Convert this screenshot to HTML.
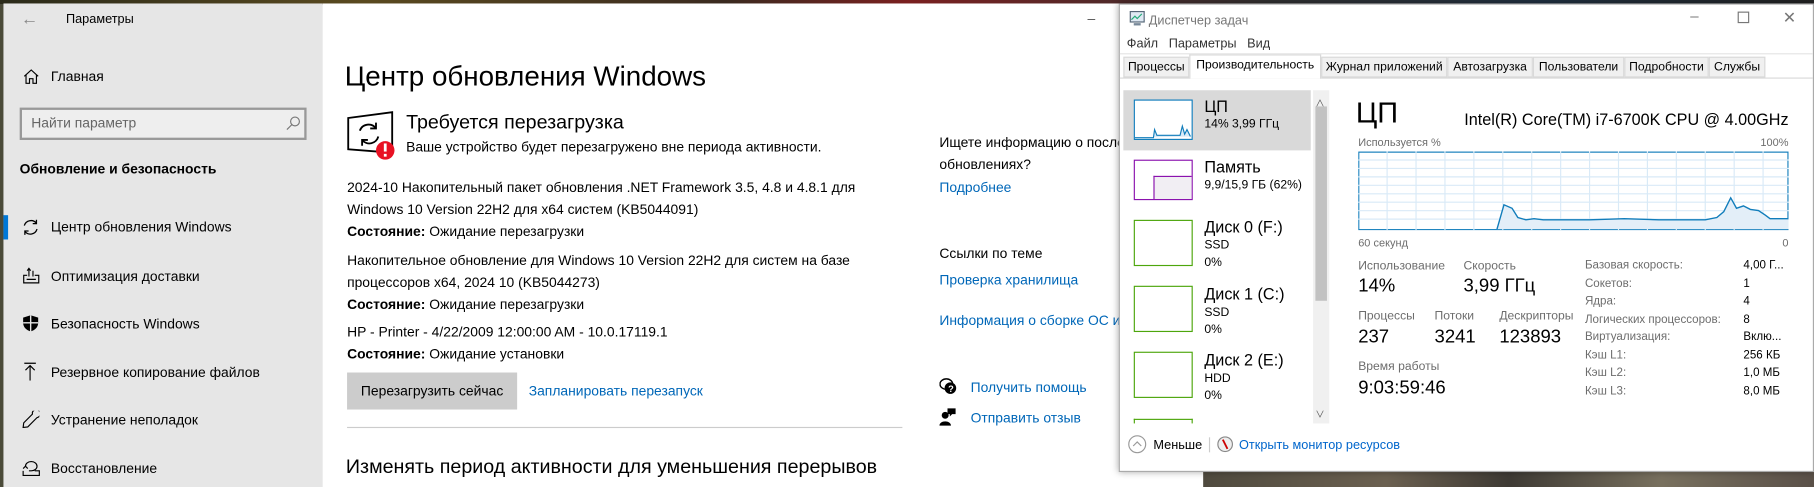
<!DOCTYPE html>
<html><head><meta charset="utf-8">
<style>
*{margin:0;padding:0;box-sizing:border-box}
html,body{width:1814px;height:487px;overflow:hidden;background:#fff}
#st{position:absolute;left:0;top:0;width:1568px;height:421px;transform:scale(1.15689);transform-origin:0 0;font-family:"Liberation Sans","Noto Sans CJK SC",sans-serif;color:#000;overflow:hidden}
.a{position:absolute;white-space:nowrap;line-height:16px}
.l{color:#0067b8}
.g{color:#6d6d6d}
.tab{position:absolute;top:49px;height:18px;background:#f0f0f0;border:1px solid #d9d9d9;font-size:10.5px;line-height:16px;text-align:center}
.th{position:absolute;left:980px;width:51px;height:40px;border:1px solid}
.i1{font-size:14px}
.sm{font-size:10.5px}
</style></head><body><div id="st">
<div style="position:absolute;left:0;top:0;width:1568px;height:4px;background:linear-gradient(90deg,#2a2a1a,#5a4a20 20%,#3a2a20 40%,#7a2020 50%,#303030 70%,#203040 85%,#222)"></div>
<div style="position:absolute;left:0;top:4px;width:3px;height:417px;background:#4a4a38"></div>
<div style="position:absolute;left:3px;top:3px;width:276px;height:418px;background:#e6e6e6"></div>
<div style="position:absolute;left:279px;top:3px;width:700px;height:418px;background:#fff"></div>
<div class="a g" style="left:18px;top:9px;font-size:15px;color:#888">&#8592;</div>
<div class="a" style="left:57px;top:9px;font-size:11px">Параметры</div>
<svg style="position:absolute;left:20px;top:59px" width="14" height="14" viewBox="0 0 14 14" fill="none" stroke="#000" stroke-width="1"><path d="M1 7L7 1.5L13 7M2.5 5.8V13H5.5V9H8.5V13H11.5V5.8"/></svg>
<div class="a" style="left:44px;top:58px;font-size:12px">Главная</div>
<div style="position:absolute;left:17px;top:93px;width:248px;height:28px;border:2px solid #999;background:#eee"></div>
<div class="a" style="left:27px;top:98px;font-size:12px;color:#666">Найти параметр</div>
<svg style="position:absolute;left:247px;top:100px" width="13" height="13" viewBox="0 0 13 13" fill="none" stroke="#777"><circle cx="8" cy="5" r="3.8"/><path d="M5.3 7.7L1 12"/></svg>
<div class="a" style="left:17px;top:138px;font-size:12px;font-weight:bold">Обновление и безопасность</div>
<div style="position:absolute;left:3px;top:186px;width:4px;height:21px;background:#0078d7"></div>
<svg style="position:absolute;left:19px;top:189px" width="15" height="15" viewBox="0 0 15 15" fill="none" stroke="#000" stroke-width="1.1"><path d="M2 6A6 6 0 0 1 12.5 4M13 9A6 6 0 0 1 2.5 11M12.5 1V4.3H9.3M2.5 14V10.7H5.7"/></svg>
<div class="a" style="left:44px;top:188px;font-size:12px">Центр обновления Windows</div>
<svg style="position:absolute;left:19px;top:231px" width="16" height="15" viewBox="0 0 16 15" fill="none" stroke="#000" stroke-width="1"><path d="M1 13.5H15M1.5 13.5V7H4.5M11 7H14.5V13.5M6 1V8M4.5 3L6 1L7.5 3M9.5 3V8M4 10.5H12"/></svg>
<div class="a" style="left:44px;top:231px;font-size:12px">Оптимизация доставки</div>
<svg style="position:absolute;left:19px;top:272px" width="15" height="15" viewBox="0 0 15 15"><path d="M7.5 0.5L1 2.5V7C1 11 4 13.5 7.5 14.5C11 13.5 14 11 14 7V2.5Z" fill="#000"/><path d="M7.5 0.5V14.5M1 7H14" stroke="#e6e6e6" stroke-width="1.2"/></svg>
<div class="a" style="left:44px;top:272px;font-size:12px">Безопасность Windows</div>
<svg style="position:absolute;left:20px;top:313px" width="12" height="16" viewBox="0 0 12 16" fill="none" stroke="#000"><path d="M1 1H11M6 3V16M2 7L6 3L10 7"/></svg>
<div class="a" style="left:44px;top:314px;font-size:12px">Резервное копирование файлов</div>
<svg style="position:absolute;left:19px;top:355px" width="15" height="15" viewBox="0 0 15 15" fill="none" stroke="#000"><path d="M9 1.5A3.5 3.5 0 1 1 13 6L5 14L1 14.5L1.5 10.5L9 3Z"/></svg>
<div class="a" style="left:44px;top:355px;font-size:12px">Устранение неполадок</div>
<svg style="position:absolute;left:19px;top:397px" width="16" height="15" viewBox="0 0 16 15" fill="none" stroke="#000"><path d="M1 10V14H15V10H11M3 6A5 4 0 1 1 8 10H6M5 8L3 6L1 8"/></svg>
<div class="a" style="left:44px;top:397px;font-size:12px">Восстановление</div>
<div class="a" style="left:940px;top:8px;font-size:12px;color:#555">–</div>
<div class="a" style="left:298px;top:52px;font-size:24px;line-height:30px;font-weight:300">Центр обновления Windows</div>
<svg style="position:absolute;left:299px;top:96px" width="48" height="44" viewBox="0 0 48 44"><path d="M2 6L40 1V36L2 33Z" fill="none" stroke="#000" stroke-width="1.6"/><g fill="none" stroke="#000" stroke-width="1.6"><path d="M12 17A8 8 0 0 1 26 15M28 22A8 8 0 0 1 14 25"/><path d="M26 10V15H21M14 30V25H19"/></g><circle cx="34" cy="34" r="8" fill="#e81123"/><rect x="32.8" y="28" width="2.4" height="7" fill="#fff"/><rect x="32.8" y="37" width="2.4" height="2.4" fill="#fff"/></svg>
<div class="a" style="left:351px;top:96px;font-size:17px;line-height:20px">Требуется перезагрузка</div>
<div class="a" style="left:351px;top:119px;font-size:12px">Ваше устройство будет перезагружено вне периода активности.</div>
<div class="a" style="left:300px;top:153px;font-size:12px;line-height:19px">2024-10 Накопительный пакет обновления .NET Framework 3.5, 4.8 и 4.8.1 для<br>Windows 10 Version 22H2 для x64 систем (KB5044091)<br><b>Состояние:</b> Ожидание перезагрузки</div>
<div class="a" style="left:300px;top:216px;font-size:12px;line-height:19px">Накопительное обновление для Windows 10 Version 22H2 для систем на базе<br>процессоров x64, 2024 10 (KB5044273)<br><b>Состояние:</b> Ожидание перезагрузки</div>
<div class="a" style="left:300px;top:278px;font-size:12px;line-height:19px">HP - Printer - 4/22/2009 12:00:00 AM - 10.0.17119.1<br><b>Состояние:</b> Ожидание установки</div>
<div style="position:absolute;left:300px;top:322px;width:147px;height:32px;background:#ccc"></div>
<div class="a" style="left:300px;top:330px;width:147px;text-align:center;font-size:12px">Перезагрузить сейчас</div>
<div class="a l" style="left:457px;top:330px;font-size:12px">Запланировать перезапуск</div>
<div style="position:absolute;left:300px;top:369px;width:480px;height:1px;background:#ccc"></div>
<div class="a" style="left:299px;top:393px;font-size:17px;line-height:22px">Изменять период активности для уменьшения перерывов</div>
<div class="a" style="left:812px;top:114px;font-size:12px;line-height:19px">Ищете информацию о последних<br>обновлениях?</div>
<div class="a l" style="left:812px;top:154px;font-size:12px">Подробнее</div>
<div class="a" style="left:812px;top:211px;font-size:12px">Ссылки по теме</div>
<div class="a l" style="left:812px;top:234px;font-size:12px">Проверка хранилища</div>
<div class="a l" style="left:812px;top:269px;font-size:12px">Информация о сборке ОС и</div>
<svg style="position:absolute;left:812px;top:326px" width="15" height="15" viewBox="0 0 15 15"><ellipse cx="6" cy="6" rx="5.5" ry="4.5" fill="none" stroke="#000" stroke-width="1.2"/><circle cx="9.5" cy="9.5" r="5" fill="#000"/><text x="7.6" y="13" font-size="8" fill="#fff" font-family="Liberation Sans" font-weight="bold">?</text></svg>
<div class="a l" style="left:839px;top:327px;font-size:12px">Получить помощь</div>
<svg style="position:absolute;left:812px;top:352px" width="15" height="16" viewBox="0 0 15 16"><circle cx="5" cy="7" r="3" fill="#000"/><path d="M0 16C0 11 10 11 10 16Z" fill="#000"/><path d="M7 1H14V6H11L9 8V6H7Z" fill="#000"/></svg>
<div class="a l" style="left:839px;top:353px;font-size:12px">Отправить отзыв</div>
<div style="position:absolute;left:1040px;top:408px;width:528px;height:13px;background:linear-gradient(90deg,#4f4a3e,#6b6050 30%,#3e3a34 50%,#78705e 75%,#5a5048)"></div>
<div style="position:absolute;left:967px;top:3px;width:601px;height:405px;background:#fff;border:1px solid #aaa;box-shadow:0 0 6px rgba(0,0,0,.35)"></div>
<svg style="position:absolute;left:976px;top:9px" width="14" height="14" viewBox="0 0 14 14"><rect x="1" y="1" width="12" height="9" fill="#dfe9f3" stroke="#567"/><path d="M2 8L5 5L7 7L11 3" stroke="#2a7" fill="none"/><rect x="4" y="11" width="6" height="2" fill="#789"/></svg>
<div class="a" style="left:993px;top:10px;font-size:11px;color:#777">Диспетчер задач</div>
<div class="a" style="left:1461px;top:6px;font-size:13px;color:#777">–</div>
<div style="position:absolute;left:1502px;top:10px;width:10px;height:10px;border:1px solid #777"></div>
<div class="a" style="left:1541px;top:7px;font-size:14px;color:#777">✕</div>
<div class="a" style="left:974px;top:30px;font-size:11px;color:#333">Файл&nbsp;&nbsp;&nbsp;Параметры&nbsp;&nbsp;&nbsp;Вид</div>
<div style="position:absolute;left:968px;top:46px;width:599px;height:1px;background:#e5e5e5"></div>
<div style="position:absolute;left:968px;top:67px;width:599px;height:1px;background:#d9d9d9"></div>
<div class="tab" style="left:971px;width:57px">Процессы</div>
<div class="tab" style="left:1028px;width:114px;top:47px;height:21px;background:#fff;border-bottom:none">Производительность</div>
<div class="tab" style="left:1142px;width:109px">Журнал приложений</div>
<div class="tab" style="left:1251px;width:74px">Автозагрузка</div>
<div class="tab" style="left:1325px;width:79px">Пользователи</div>
<div class="tab" style="left:1404px;width:73px">Подробности</div>
<div class="tab" style="left:1477px;width:49px">Службы</div>
<div style="position:absolute;left:971px;top:78px;width:162px;height:52px;background:#d9d9d9"></div>
<div style="position:absolute;left:1135px;top:78px;width:14px;height:288px;background:#f0f0f0"></div>
<div style="position:absolute;left:1137px;top:92px;width:10px;height:168px;background:#c2c2c2"></div>
<div class="a" style="left:1137px;top:82px;font-size:8px;color:#555">&#8743;</div>
<div class="a" style="left:1137px;top:351px;font-size:8px;color:#555">&#8744;</div>
<div class="th" style="top:86px;height:35px;border-color:#117dbb;background:#fff"><svg width="49" height="33" viewBox="0 0 49 33" style="position:absolute;left:0;top:0"><polyline points="0,32 16,32 17,25 19,30 39,30 41,22 43,29 45,25 48,31" fill="#d9eaf7" stroke="#117dbb" stroke-width="1"/></svg></div>
<div class="a i1" style="left:1041px;top:84px">ЦП</div>
<div class="a sm" style="left:1041px;top:99px">14% 3,99 ГГц</div>
<div class="th" style="top:138px;height:35px;border-color:#8b12ae;background:#fff"><div style="position:absolute;left:16px;top:13px;width:33px;height:20px;background:#f1eef3;border-top:1px solid #8b12ae;border-left:1px solid #8b12ae"></div></div>
<div class="a i1" style="left:1041px;top:136px">Память</div>
<div class="a sm" style="left:1041px;top:152px">9,9/15,9 ГБ (62%)</div>
<div class="th" style="top:190px;border-color:#4da60c"></div>
<div class="a i1" style="left:1041px;top:188px">Диск 0 (F:)</div>
<div class="a sm" style="left:1041px;top:204px">SSD</div>
<div class="a sm" style="left:1041px;top:219px">0%</div>
<div class="th" style="top:247px;border-color:#4da60c"></div>
<div class="a i1" style="left:1041px;top:246px">Диск 1 (C:)</div>
<div class="a sm" style="left:1041px;top:262px">SSD</div>
<div class="a sm" style="left:1041px;top:277px">0%</div>
<div class="th" style="top:304px;border-color:#4da60c"></div>
<div class="a i1" style="left:1041px;top:303px">Диск 2 (E:)</div>
<div class="a sm" style="left:1041px;top:319px">HDD</div>
<div class="a sm" style="left:1041px;top:334px">0%</div>
<div style="position:absolute;left:980px;top:362px;width:51px;height:4px;border:1px solid #4da60c;border-bottom:none"></div>
<div class="a" style="left:1172px;top:84px;font-size:25px;line-height:28px">ЦП</div>
<div class="a" style="left:1246px;top:94px;width:300px;text-align:right;font-size:14px;line-height:18px">Intel(R) Core(TM) i7-6700K CPU @ 4.00GHz</div>
<div class="a g" style="left:1174px;top:116px;font-size:9.5px">Используется %</div>
<div class="a g" style="left:1496px;top:116px;width:50px;text-align:right;font-size:9.5px">100%</div>
<svg style="position:absolute;left:1174px;top:131px" width="372" height="68" viewBox="0 0 372 68" preserveAspectRatio="none">
<rect x="0.5" y="0.5" width="371" height="67" fill="#fff" stroke="#117dbb"/>
<g stroke="#d9eaf7" stroke-width="1">
<path d="M0 7.3H372M0 14.6H372M0 21.9H372M0 29.2H372M0 36.5H372M0 43.8H372M0 51.1H372M0 58.4H372"/>
<path d="M25 0V68M50 0V68M75 0V68M100 0V68M125 0V68M150 0V68M175 0V68M200 0V68M225 0V68M250 0V68M275 0V68M300 0V68M325 0V68M350 0V68"/>
</g>
<polygon points="120,67 126,46 133,49 138,57 145,59 152,58 160,59 170,59 200,59 230,58 260,59 300,59 310,57 316,52 322,40 327,49 333,47 339,50 346,51 352,55 356,58 372,58 372,67" fill="#e3eef8" stroke="none"/>
<polyline points="120,67 126,46 133,49 138,57 145,59 152,58 160,59 170,59 200,59 230,58 260,59 300,59 310,57 316,52 322,40 327,49 333,47 339,50 346,51 352,55 356,58 372,58" fill="none" stroke="#117dbb" stroke-width="1.2"/>
</svg>
<div class="a g" style="left:1174px;top:203px;font-size:9.5px">60 секунд</div>
<div class="a g" style="left:1530px;top:203px;width:16px;text-align:right;font-size:9.5px">0</div>
<div class="a g" style="left:1174px;top:222px;font-size:10.5px">Использование</div>
<div class="a g" style="left:1265px;top:222px;font-size:10.5px">Скорость</div>
<div class="a" style="left:1174px;top:238px;font-size:16px;line-height:20px">14%</div>
<div class="a" style="left:1265px;top:238px;font-size:16px;line-height:20px">3,99 ГГц</div>
<div class="a g" style="left:1174px;top:265px;font-size:10.5px">Процессы</div>
<div class="a g" style="left:1240px;top:265px;font-size:10.5px">Потоки</div>
<div class="a g" style="left:1296px;top:265px;font-size:10.5px">Дескрипторы</div>
<div class="a" style="left:1174px;top:282px;font-size:16px;line-height:20px">237</div>
<div class="a" style="left:1240px;top:282px;font-size:16px;line-height:20px">3241</div>
<div class="a" style="left:1296px;top:282px;font-size:16px;line-height:20px">123893</div>
<div class="a g" style="left:1174px;top:309px;font-size:10.5px">Время работы</div>
<div class="a" style="left:1174px;top:326px;font-size:16px;line-height:20px">9:03:59:46</div>
<div class="a g" style="left:1370px;top:222px;font-size:10px;line-height:15.5px">Базовая скорость:<br>Сокетов:<br>Ядра:<br>Логических процессоров:<br>Виртуализация:<br>Кэш L1:<br>Кэш L2:<br>Кэш L3:</div>
<div class="a" style="left:1507px;top:222px;font-size:10px;line-height:15.5px">4,00 Г...<br>1<br>4<br>8<br>Вклю...<br>256 КБ<br>1,0 МБ<br>8,0 МБ</div>
<svg style="position:absolute;left:975px;top:376px" width="16" height="16" viewBox="0 0 16 16" fill="none" stroke="#999"><circle cx="8" cy="8" r="7.3"/><path d="M4.5 9.5L8 6L11.5 9.5"/></svg>
<div class="a" style="left:997px;top:377px;font-size:11px">Меньше</div>
<div style="position:absolute;left:1045px;top:378px;width:1px;height:13px;background:#ccc"></div>
<svg style="position:absolute;left:1052px;top:377px" width="14" height="14" viewBox="0 0 14 14"><circle cx="7" cy="7" r="6.3" fill="#eee" stroke="#888"/><path d="M5 3L9 11" stroke="#c00" stroke-width="1.6"/></svg>
<div class="a" style="left:1071px;top:377px;font-size:11px;color:#0066cc">Открыть монитор ресурсов</div>
</div></body></html>
